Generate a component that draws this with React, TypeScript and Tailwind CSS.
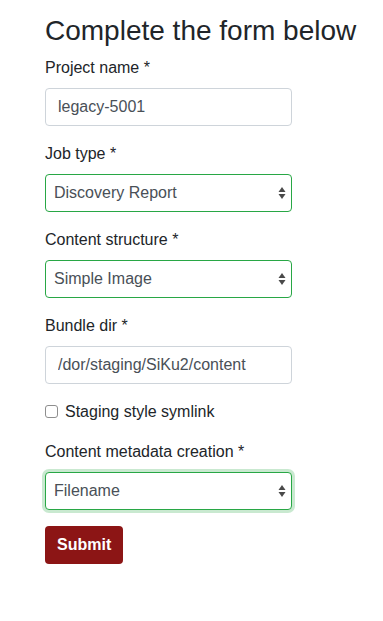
const font = { fontFamily: '"Liberation Sans", Arial, sans-serif' };

function Arrows() {
  return (
    <svg
      className="pointer-events-none absolute right-[6px] top-1/2 -translate-y-1/2"
      width="8"
      height="14"
      viewBox="0 0 8 14"
    >
      <path d="M4 1 L7.5 6 L0.5 6 Z" fill="#4a4a4a" />
      <path d="M4 13 L7.5 8 L0.5 8 Z" fill="#4a4a4a" />
    </svg>
  );
}

function Label({ children }: { children: React.ReactNode }) {
  return <label className="mb-2 block text-base leading-6 text-[#212529]">{children}</label>;
}

function TextField({ label, value }: { label: string; value: string }) {
  return (
    <div className="mb-4">
      <Label>{label} *</Label>
      <input
        readOnly
        value={value}
        className="block h-[38px] w-[247px] rounded border border-[#ced4da] bg-white px-3 text-base text-[#495057] outline-none"
      />
    </div>
  );
}

function SelectField({
  label,
  value,
  focused = false,
}: {
  label: string;
  value: string;
  focused?: boolean;
}) {
  return (
    <div className="mb-4">
      <Label>{label} *</Label>
      <div className="relative w-[247px]">
        <select
          defaultValue={value}
          className={`block h-[38px] w-full appearance-none rounded border border-[#28a745] bg-white pl-2 pr-6 text-base text-[#495057] outline-none ${
            focused ? "shadow-[0_0_0_3px_rgba(40,167,69,0.25)]" : ""
          }`}
        >
          <option>{value}</option>
        </select>
        <Arrows />
      </div>
    </div>
  );
}

export default function App() {
  return (
    <div className="min-h-screen bg-white px-[45px] pt-[14px]" style={font}>
      <h2 className="mb-2 whitespace-nowrap text-[28px] font-medium leading-[1.2] text-[#212529]">
        Complete the form below
      </h2>
      <form>
        <TextField label="Project name" value="legacy-5001" />
        <SelectField label="Job type" value="Discovery Report" />
        <SelectField label="Content structure" value="Simple Image" />
        <TextField label="Bundle dir" value="/dor/staging/SiKu2/content" />
        <div className="mb-4 flex h-6 items-center">
          <input
            type="checkbox"
            className="m-0 h-[13px] w-[13px] appearance-none rounded-[3px] border border-[#8e8e8e] bg-white"
          />
          <span className="ml-[7px] text-base text-[#212529]">Staging style symlink</span>
        </div>
        <SelectField label="Content metadata creation" value="Filename" focused />
        <button
          type="button"
          className="h-[38px] rounded bg-[#8c1515] px-3 text-base font-bold text-white"
        >
          Submit
        </button>
      </form>
    </div>
  );
}
